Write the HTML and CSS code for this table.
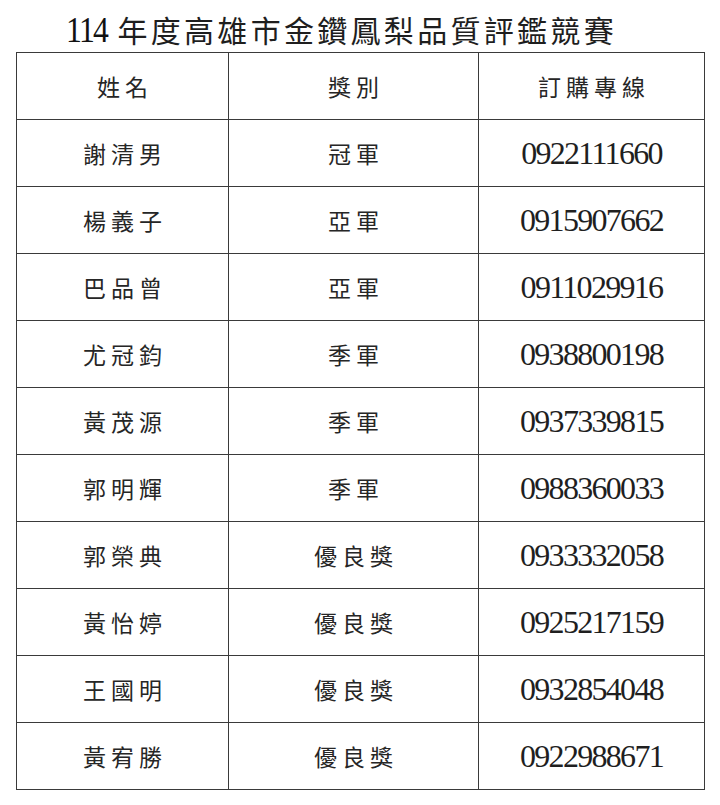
FILE: index.html
```html
<!DOCTYPE html>
<html lang="zh-Hant">
<head>
<meta charset="utf-8">
<title>114 年度高雄市金鑽鳳梨品質評鑑競賽</title>
<link rel="stylesheet" href="styles.css">
</head>
<body>
<div class="page">
  <h1 class="title"><span class="title-num">114</span> 年度高雄市金鑽鳳梨品質評鑑競賽</h1>
  <table class="results">
    <colgroup>
      <col class="c-name"><col class="c-award"><col class="c-phone">
    </colgroup>
    <thead>
      <tr><th>姓名</th><th>獎別</th><th>訂購專線</th></tr>
    </thead>
    <tbody>
      <tr><td>謝清男</td><td>冠軍</td><td class="num">0922111660</td></tr>
      <tr><td>楊義子</td><td>亞軍</td><td class="num">0915907662</td></tr>
      <tr><td>巴品曾</td><td>亞軍</td><td class="num">0911029916</td></tr>
      <tr><td>尤冠鈞</td><td>季軍</td><td class="num">0938800198</td></tr>
      <tr><td>黃茂源</td><td>季軍</td><td class="num">0937339815</td></tr>
      <tr><td>郭明輝</td><td>季軍</td><td class="num">0988360033</td></tr>
      <tr><td>郭榮典</td><td>優良獎</td><td class="num">0933332058</td></tr>
      <tr><td>黃怡婷</td><td>優良獎</td><td class="num">0925217159</td></tr>
      <tr><td>王國明</td><td>優良獎</td><td class="num">0932854048</td></tr>
      <tr><td>黃宥勝</td><td>優良獎</td><td class="num">0922988671</td></tr>
    </tbody>
  </table>
</div>
</body>
</html>
```

FILE: styles.css
```css
html, body {
  margin: 0;
  padding: 0;
  background: #ffffff;
}

.page {
  width: 720px;
  height: 805px;
  font-family: "Liberation Serif", "Noto Sans CJK TC", serif;
  color: #222222;
}

.title {
  margin: 0;
  padding: 8px 0 0 66px;
  height: 44px;
  line-height: 44px;
  font-size: 30px;
  font-weight: 400;
  letter-spacing: 3.3px;
  white-space: nowrap;
  color: #1e1e1e;
}

.title-num {
  display: inline-block;
  font-size: 36px;
  letter-spacing: -2px;
  transform: scaleX(0.88);
  transform-origin: left center;
  margin-right: -6px;
  color: #111111;
}

.results {
  margin-left: 16px;
  width: 688px;
  border-collapse: collapse;
  table-layout: fixed;
}

.c-name { width: 212px; }
.c-award { width: 250px; }
.c-phone { width: 226px; }

.results th,
.results td {
  border: 1px solid #3a3a3a;
  height: 66px;
  padding: 0;
  text-align: center;
  vertical-align: middle;
  font-size: 23px;
  font-weight: 400;
  letter-spacing: 5px;
  text-indent: 5px;
  color: #262626;
}

.results td.num {
  font-size: 32px;
  letter-spacing: -1.7px;
  text-indent: 0;
  color: #1f1f1f;
}
```
